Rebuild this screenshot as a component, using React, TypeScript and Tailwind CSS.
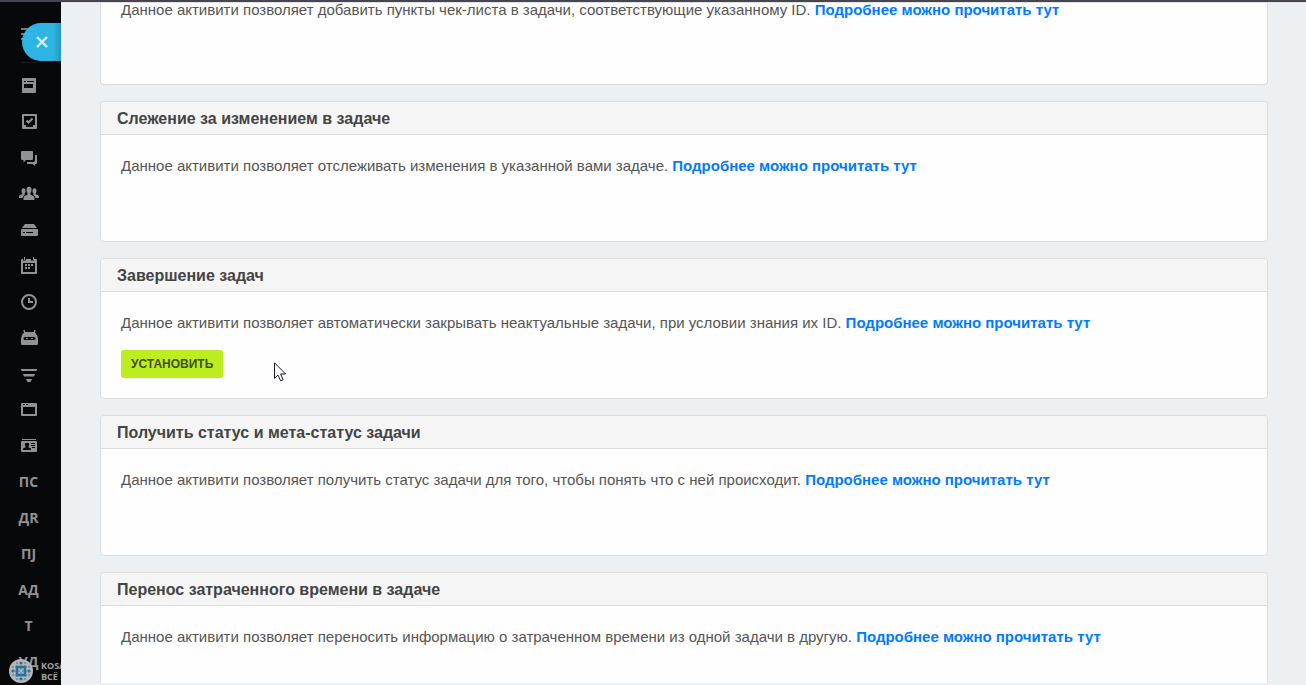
import type { ReactNode } from "react";

// Sidebar entries: pictograms first, then two-letter shortcuts.

const ICONS: { label: string; art: ReactNode }[] = [
  {
    label: "Лента",
    art: (
      <path
        fillRule="evenodd"
        d="M5 3h12a1 1 0 0 1 1 1v13a1 1 0 0 1-1 1H5a1 1 0 0 1-1-1V4a1 1 0 0 1 1-1zM6 6v1h2V6zM9 6v1h7V6zM6 9v4h9V9z"
      />
    ),
  },
  {
    label: "Задачи",
    art: (
      <>
        <path
          fillRule="evenodd"
          d="M5 3h13a1 1 0 0 1 1 1v13a1 1 0 0 1-1 1H5a1 1 0 0 1-1-1V4a1 1 0 0 1 1-1zM6 5v9h2v2h7v-2h2V5z"
        />
        <path d="M8.500 9.500l2 2 4-4" fill="none" stroke="currentColor" strokeWidth="2" />
      </>
    ),
  },
  {
    label: "Чат",
    art: (
      <>
        <path d="M4 4h10a1 1 0 0 1 1 1v7a1 1 0 0 1-1 1H8l-2.500 2.500V13H4a1 1 0 0 1-1-1V5a1 1 0 0 1 1-1z" />
        <path d="M17 8h1a1 1 0 0 1 1 1v7a1 1 0 0 1-1 1h-1v2l-2.500-2H10a1 1 0 0 1-1-1v-1h6a2 2 0 0 0 2-2z" />
      </>
    ),
  },
  {
    label: "Группы",
    art: (
      <>
        <ellipse cx="11" cy="7" rx="2.500" ry="3.200" />
        <path d="M5.500 17v-2c0-2 2-2.500 4-3.500V9h3v2.500c2 1 4 1.500 4 3.500v2z" />
        <ellipse cx="5.500" cy="8" rx="2" ry="2.800" />
        <ellipse cx="16.500" cy="8" rx="2" ry="2.800" />
        <path d="M1 15v-1.500c0-1.500 2-1.500 3.500-2.500V10h2v1.500l.5.5c-1.500.8-2.300 1.500-2.400 3zM21 15v-1.500c0-1.500-2-1.500-3.500-2.500V10h-2v1.500l-.5.5c1.500.8 2.300 1.500 2.400 3z" />
      </>
    ),
  },
  {
    label: "Диск",
    art: (
      <>
        <path d="M7 5h9l3 4H4z" />
        <path
          fillRule="evenodd"
          d="M4 10h15a1 1 0 0 1 1 1v5a1 1 0 0 1-1 1H4a1 1 0 0 1-1-1v-5a1 1 0 0 1 1-1zM5 13v1h2v-1zM8 13v1h7v-1z"
        />
      </>
    ),
  },
  {
    label: "Календарь",
    art: (
      <>
        <path
          fillRule="evenodd"
          d="M4 4h1v1.500h3V4h5v1.500h3V4h2a1 1 0 0 1 1 1v13a1 1 0 0 1-1 1H4a1 1 0 0 1-1-1V5a1 1 0 0 1 1-1zM5 8v9h12V8z"
        />
        <path d="M6 2h1v3H6zM15 2h1v3h-1zM10 9h2v2h-2zM13 9h2v2h-2zM7 9h2v2H7zM7 12h2v2H7zM10 12h2v2h-2z" />
      </>
    ),
  },
  {
    label: "Время",
    art: (
      <>
        <circle cx="11" cy="11" r="7" fill="none" stroke="currentColor" strokeWidth="2" />
        <path d="M11 7v4h4" fill="none" stroke="currentColor" strokeWidth="2" />
      </>
    ),
  },
  {
    label: "Роботы",
    art: (
      <>
        <path
          fillRule="evenodd"
          d="M7 5h9c3 1.500 4 5 4 8v3.500a1.500 1.500 0 0 1-1.500 1.500h-14A1.500 1.500 0 0 1 3 16.500V13c0-3 1-6.500 4-8zM7 10a1.500 1.500 0 0 0 0 3h9a1.500 1.500 0 0 0 0-3z"
        />
        <path d="M6 3l1 4M17 3l-1 4" fill="none" stroke="currentColor" strokeWidth="1.400" />
        <path d="M8 11h2v1H8zM13 11h2v1h-2z" />
      </>
    ),
  },
  {
    label: "Воронка",
    art: <path d="M3 6h16v1l-1 1H4L3 7zM5 11h12l-1 2.500H6zM8 16h6l-1.500 3h-3z" />,
  },
  {
    label: "Сайты",
    art: (
      <path
        fillRule="evenodd"
        d="M4 4h14a1 1 0 0 1 1 1v11a1 1 0 0 1-1 1H4a1 1 0 0 1-1-1V5a1 1 0 0 1 1-1zM5 5v1h2V5zM8 5v1h2V5zM5 8v7h12V8z"
      />
    ),
  },
  {
    label: "Контакты",
    art: (
      <>
        <path d="M4 4h14v1H4z" />
        <path
          fillRule="evenodd"
          d="M4 6h14a1 1 0 0 1 1 1v9a1 1 0 0 1-1 1H4a1 1 0 0 1-1-1V7a1 1 0 0 1 1-1zM7 8v3l1 1-3 1.500V15h8v-1.500L10 12l1-1V8zM13 8v1h4V8zM13 10v1h4v-1zM14 12v1h3v-1z"
        />
      </>
    ),
  },
];

const SHORTCUTS = ["ПС", "ДR", "ПJ", "АД", "Т", "УД"];

const MORE = "Подробнее можно прочитать тут";

const ACTIVITIES: { title: string; text: string; installable?: boolean }[] = [
  {
    title: "Слежение за изменением в задаче",
    text: "Данное активити позволяет отслеживать изменения в указанной вами задаче.",
  },
  {
    title: "Завершение задач",
    text: "Данное активити позволяет автоматически закрывать неактуальные задачи, при условии знания их ID.",
    installable: true,
  },
  {
    title: "Получить статус и мета-статус задачи",
    text: "Данное активити позволяет получить статус задачи для того, чтобы понять что с ней происходит.",
  },
  {
    title: "Перенос затраченного времени в задаче",
    text: "Данное активити позволяет переносить информацию о затраченном времени из одной задачи в другую.",
  },
];

function Sidebar() {
  return (
    <aside className="relative w-[61px] shrink-0 overflow-hidden bg-[#07080a] text-[#929292]">
      <div className="ml-[21px] mt-[26px] flex h-[35px] w-4 flex-col gap-[3px] border-b border-[#1c181c]">
        <i className="h-0.5 bg-[#777]" />
        <i className="h-0.5 bg-[#777]" />
        <i className="h-0.5 bg-[#777]" />
      </div>
      <nav className="mt-[5px] flex w-[58px] flex-col">
        {ICONS.map((item) => (
          <a key={item.label} href="#" aria-label={item.label} className="flex h-9 items-center justify-center">
            <svg viewBox="0 0 22 22" className="h-[22px] w-[22px]" fill="currentColor">
              {item.art}
            </svg>
          </a>
        ))}
        {SHORTCUTS.map((name) => (
          <a
            key={name}
            href="#"
            className="flex h-9 items-center justify-center pr-px font-['Open_Sans',sans-serif] text-sm font-bold"
          >
            {name}
          </a>
        ))}
      </nav>
      <button
        type="button"
        aria-label="Закрыть"
        className="absolute right-0 top-[21px] flex h-[38px] w-[39px] items-center rounded-l-full bg-linear-to-r from-[#2fbdee]/95 from-80% to-[#279fc9]/95 pl-3.5 text-[#d5f2fc]"
      >
        <svg viewBox="0 0 12 12" className="h-3 w-3" stroke="currentColor" strokeWidth="2.400">
          <path d="M1 1l10 10M11 1L1 11" />
        </svg>
      </button>
      <Watermark />
    </aside>
  );
}

function Watermark() {
  const steps = [-8, -4, 0, 4, 8];
  return (
    <div className="absolute left-[9px] top-[657px] flex items-center gap-2">
      <svg viewBox="-12 -12 24 24" className="h-6 w-6 shrink-0">
        <circle r="12" fill="#b4b6b8" />
        <g fill="#28709f">
          {steps.flatMap((x) =>
            steps.map((y) => {
              const far = Math.abs(x) + Math.abs(y);
              return far > 12 ? null : <circle key={`${x},${y}`} cx={x} cy={y} r={far > 8 ? 0.8 : 1.6} />;
            }),
          )}
        </g>
        <path d="M-4-4H4V4H-4z" fill="none" stroke="#28709f" strokeWidth="2.400" />
        <path d="M-2-2l4 4M2-2l-4 4" stroke="#b4b6b8" />
      </svg>
      <p className="whitespace-nowrap font-['Open_Sans',sans-serif] text-[9px] font-bold leading-[11px] text-[#a0a0a0]">
        KOSAREV
        <br />
        ВСЁ ПРО
      </p>
    </div>
  );
}

function ActivityText({ text }: { text: string }) {
  return (
    <>
      {text}{" "}
      <a href="#" className="font-bold text-[#007bff]">
        {MORE}
      </a>
    </>
  );
}

function ActivityCard({ title, text, installable }: { title: string; text: string; installable?: boolean }) {
  return (
    <section className="min-h-[141px] shrink-0 overflow-hidden rounded border border-[#dcdcdc] bg-[#fefefe]">
      <h2 className="border-b border-[#dcdcdc] bg-[#f5f5f5] px-4 pb-[3px] pt-[5px] text-base font-bold text-[#444]">
        {title}
      </h2>
      <div className="px-5 pt-5">
        <p className="text-[15px] leading-[22px] text-[#555]">
          <ActivityText text={text} />
        </p>
        {installable && (
          <button
            type="button"
            className="mt-4 h-7 rounded-xs bg-[#bbed21] px-2.5 text-xs font-bold uppercase text-[#444f20]"
          >
            Установить
          </button>
        )}
      </div>
    </section>
  );
}

export default function App() {
  return (
    <div className="relative flex h-screen overflow-hidden border-t-2 border-[#47454f] bg-[#ecf0f3] font-['Liberation_Sans',Arial,sans-serif]">
      <Sidebar />
      <main className="flex min-w-0 flex-1 flex-col gap-4 overflow-hidden border-b-2 border-t border-b-[#ecf0f3] border-t-[#dfe1e3] pl-[39px] pr-[38px]">
        {/* tail of the card that is scrolled under the top edge */}
        <section className="min-h-[82px] shrink-0 rounded-b border border-t-0 border-[#dcdcdc] bg-[#fefefe] px-5">
          <p className="text-[15px] leading-[14px] text-[#555]">
            <ActivityText text="Данное активити позволяет добавить пункты чек-листа в задачи, соответствующие указанному ID." />
          </p>
        </section>
        {ACTIVITIES.map((a) => (
          <ActivityCard key={a.title} {...a} />
        ))}
      </main>
      <svg viewBox="0 0 13 20" className="absolute left-[274px] top-[360px] h-5 w-[13px]" fill="#fff" stroke="#181828">
        <path d="M.5.8v15.500l3.500-3.200 2.600 5.700 2.500-1.100L6.600 12h5z" />
      </svg>
    </div>
  );
}
